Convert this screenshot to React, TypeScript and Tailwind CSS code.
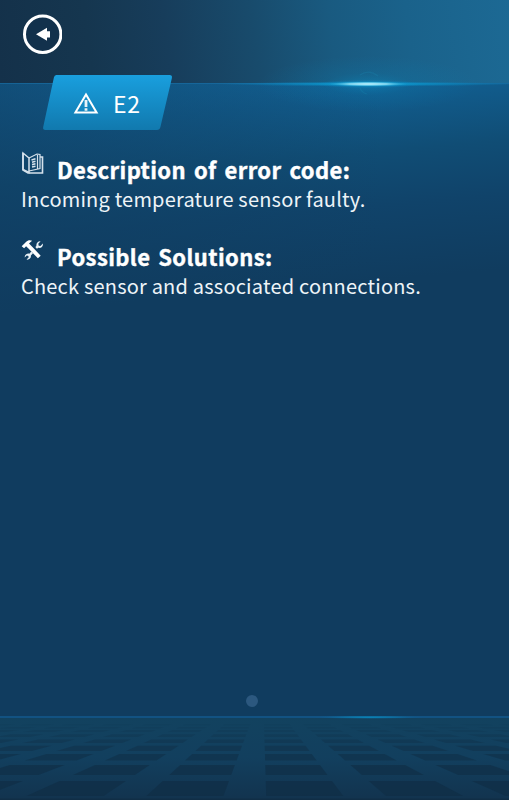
import type { ReactNode } from "react";

// Floor tiles: rows are y ranges, columns are slopes seen from the vanishing point
const VANISH = { x: 263, y: 689 };
const TILE_ROWS = [
  { top: 724, bottom: 725.2, opacity: 0.08 },
  { top: 727, bottom: 728.4, opacity: 0.12 },
  { top: 730, bottom: 732, opacity: 0.18 },
  { top: 734.3, bottom: 737, opacity: 0.25 },
  { top: 739.5, bottom: 743, opacity: 0.36 },
  { top: 745.7, bottom: 751, opacity: 0.46 },
  { top: 754, bottom: 760.5, opacity: 0.55 },
  { top: 765, bottom: 775, opacity: 0.65 },
  { top: 781, bottom: 796, opacity: 0.7 },
];
const TILE_COLUMNS = [-8, -7, -6, -5, -4, -3, -2, -1, 0, 1, 2, 3, 4, 5, 6, 7];

function tilePoints(column: number, top: number, bottom: number) {
  const left = 0.03 + column * 1.12;
  const right = left + 0.72;
  const at = (slope: number, y: number) => `${VANISH.x + slope * (y - VANISH.y)},${y}`;
  return [at(left, top), at(right, top), at(right, bottom), at(left, bottom)].join(" ");
}

function Floor() {
  return (
    <svg viewBox="0 716 509 84" className="block h-[84px] w-full" aria-hidden="true">
      <defs>
        <linearGradient id="floor" x1="0" y1="0" x2="0" y2="1">
          <stop offset="0" stopColor="#12425f" />
          <stop offset="0.5" stopColor="#123f5e" />
          <stop offset="1" stopColor="#12334e" />
        </linearGradient>
        <radialGradient id="floor-glow">
          <stop offset="0" stopColor="#078cc0" />
          <stop offset="0.5" stopColor="#0b79ac" stopOpacity="0.6" />
          <stop offset="1" stopColor="#125282" stopOpacity="0" />
        </radialGradient>
      </defs>
      <rect y="716" width="509" height="84" fill="url(#floor)" />
      {TILE_ROWS.map((row) => (
        <g key={row.top} fill="#102e46" opacity={row.opacity}>
          {TILE_COLUMNS.map((column) => (
            <polygon key={column} points={tilePoints(column, row.top, row.bottom)} />
          ))}
        </g>
      ))}
      <rect y="798.5" width="509" height="1.5" fill="#102e46" />
      <rect y="716" width="509" height="2" fill="#125282" />
      <ellipse cx="369" cy="717.2" rx="58" ry="1.8" fill="url(#floor-glow)" />
    </svg>
  );
}

function Flare() {
  return (
    <svg viewBox="0 0 509 120" className="absolute left-0 top-[-59px] h-[120px] w-full" aria-hidden="true">
      <defs>
        <radialGradient id="haze">
          <stop offset="0" stopColor="#0798ce" stopOpacity="0.42" />
          <stop offset="0.4" stopColor="#0787bd" stopOpacity="0.15" />
          <stop offset="1" stopColor="#0787bd" stopOpacity="0" />
        </radialGradient>
        <radialGradient id="streak">
          <stop offset="0" stopColor="#20b8ea" />
          <stop offset="0.4" stopColor="#0b96cc" stopOpacity="0.7" />
          <stop offset="1" stopColor="#0b86c0" stopOpacity="0" />
        </radialGradient>
        <radialGradient id="core">
          <stop offset="0" stopColor="#c4f4ff" />
          <stop offset="0.5" stopColor="#8bdcf3" stopOpacity="0.85" />
          <stop offset="1" stopColor="#27b0df" stopOpacity="0" />
        </radialGradient>
      </defs>
      <rect y="59" width="509" height="1" fill="#1a6ea4" opacity="0.65" />
      <ellipse cx="368" cy="60" rx="110" ry="28" fill="url(#haze)" />
      <ellipse cx="368" cy="60" rx="150" ry="2.4" fill="url(#streak)" />
      <ellipse cx="368" cy="60" rx="54" ry="4.2" fill="url(#streak)" />
      <ellipse cx="368" cy="60" rx="40" ry="2.5" fill="url(#core)" />
      <path d="M360 51q9-6 18 1M360 64q2 5 7 6" fill="none" stroke="#1b83ae" strokeWidth="1.2" opacity="0.3" />
    </svg>
  );
}

function BookIcon() {
  return (
    <svg viewBox="0 0 22 24" className="h-6 w-[22px]" fill="none" stroke="#d5e1eb" aria-hidden="true">
      <path d="M1 2v17l5 3h14.5V6H18" strokeWidth="1.6" />
      <path d="M1 2l6 5v14.5L1 18.5z" strokeWidth="1.5" />
      <path d="M7 7l8-4 3 .5v14L7 20M15.5 4v14" strokeWidth="1.2" />
      <path d="M9.5 9l4-1.2M10 11.3l3.5-1M10 13.6l3.5-.8M10 16l3.5-.7" strokeWidth="1.6" />
    </svg>
  );
}

function ToolsIcon() {
  return (
    <svg viewBox="0 0 22 22" className="-ml-px mt-px h-[22px] w-[22px]" aria-hidden="true">
      <path
        d="M15.9 9.7l-1.6-1.6 1.1-1.2c-.3-2.6 1.2-4.8 4.2-4.7l-2.3 2.6.4 1.9 1.8.2 2.4-2.4c.4 2.9-1.7 4.9-4.5 4.3zM10.3 12.6l-2 2.1c-2.4-.5-4.7 1-4.6 3.8l2.1-2 1.6.4.2 1.5-2.1 2.2c3 .4 4.8-1.6 4.4-4.2l2.1-2.1z"
        fill="#e9f1f6"
      />
      <path d="M.7 7.3l4.8-4.7c2-1.7 3.7-1.7 5.6-.8L8 4.5l2.7 2.8 9 9.4-2.8 2.6-9.2-9.5-2.6-2.6-2 2z" fill="#fff" />
    </svg>
  );
}

function Section({ icon, title, children }: { icon: ReactNode; title: string; children: ReactNode }) {
  return (
    <section className="h-[87px]">
      <div className="flex h-[34px] items-start">
        <div className="w-[35px] shrink-0">{icon}</div>
        <h2 className="whitespace-nowrap pt-[3px] text-[22px] leading-[30px] font-bold tracking-[0.4px] [word-spacing:2.5px] [-webkit-text-stroke:0.4px_white]">
          {title}
        </h2>
      </div>
      <p className="-ml-px whitespace-nowrap text-[20px] leading-7 tracking-[0.2px] text-[#eef4f8]">{children}</p>
    </section>
  );
}

export default function App() {
  return (
    <div className="relative flex h-[800px] w-[509px] flex-col overflow-hidden bg-[#103c5f] font-['Noto_Sans_CJK_SC',sans-serif] text-white">
      <header className="h-[83px] shrink-0 bg-[linear-gradient(83deg,#14314a_0%,#15364f_18%,#173d5b_33%,#184b6c_50%,#195a80_65%,#1a628b_80%,#1c6994_100%)] pt-[14px] pl-[22px]">
        <button type="button" aria-label="Back" className="block h-10 w-10">
          <svg viewBox="0 0 40 40" className="h-10 w-10">
            <circle cx="20.7" cy="20.3" r="18.2" fill="#12314c" stroke="#fff" strokeWidth="3" />
            <path d="M14 20.3l11-6.5v3.4h3v6.2h-3v3.3z" fill="#fff" />
          </svg>
        </button>
      </header>

      <main className="relative flex-1 bg-[linear-gradient(175deg,#136aa0_0%,#115b8b_7%,#104d75_15%,#10436a_23%,#103c5f_34%,#103c5f_100%)]">
        <div className="absolute inset-0 bg-[linear-gradient(90deg,#103c5f99_0%,#103c5f44_45%,#103c5f00_75%)]" />
        <Flare />
        <div className="absolute left-[42px] top-[-8px]">
          <svg viewBox="0 0 131 56" className="block h-14 w-[131px]" aria-hidden="true">
            <defs>
              <linearGradient id="tab" x1="0" y1="0" x2="0" y2="1">
                <stop offset="0" stopColor="#199fde" />
                <stop offset="1" stopColor="#1179ae" />
              </linearGradient>
            </defs>
            <path d="M14.3 0H127.5q3 0 2.4 3L118.4 52q-.7 3-3.5 3H3.5q-3 0-2.3-3L11.9 2.5Q12.4 0 14.3 0z" fill="url(#tab)" />
          </svg>
          <div className="absolute inset-0 flex items-center pl-[31px]">
            <svg viewBox="0 0 26 22" className="h-[22px] w-[26px]" aria-hidden="true">
              <path d="M13 2.5L2.4 20.5h21.2z" fill="none" stroke="#fff" strokeWidth="2" />
              <path d="M13 8v7M13 16.2v2.6" stroke="#fff" strokeWidth="2.8" opacity="0.9" />
            </svg>
            <span className="pl-[14px] text-[23px] leading-7 tracking-[0.6px]">E2</span>
          </div>
        </div>
        <div className="relative pt-[68px] pl-[22px]">
          <Section icon={<BookIcon />} title="Description of error code:">
            Incoming temperature sensor faulty.
          </Section>
          <Section icon={<ToolsIcon />} title="Possible Solutions:">
            Check sensor and associated connections.
          </Section>
        </div>
        <div className="absolute bottom-[9px] left-[246px] h-3 w-3 rounded-full bg-[#2c587f]" />
      </main>

      <Floor />
    </div>
  );
}
